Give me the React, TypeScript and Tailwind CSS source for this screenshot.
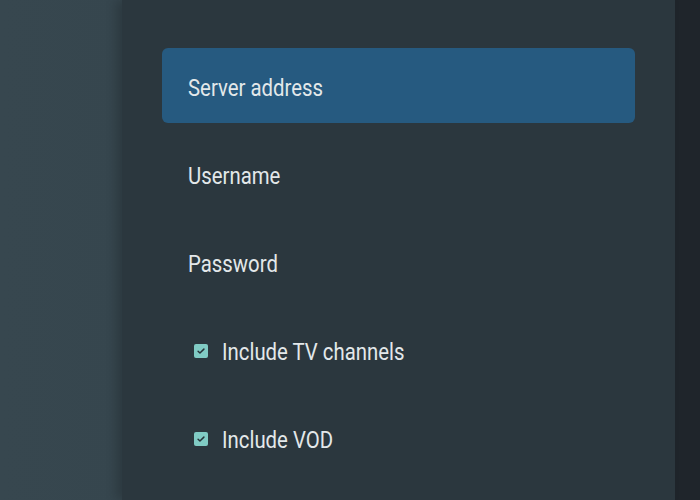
import React from 'react';

const items = [
    { label: 'Server address', active: true },
    { label: 'Username' },
    { label: 'Password' },
    { label: 'Include TV channels', checkbox: true },
    { label: 'Include VOD', checkbox: true },
];

const CheckBox = () => (
    <span className="mr-[14px] mt-[3px] flex h-[14px] w-[14px] shrink-0 items-center justify-center rounded-[2px] bg-[#80cbc4]">
        <svg width="10" height="10" viewBox="0 0 24 24" fill="none" stroke="#263238" strokeWidth="3.5" strokeLinecap="round" strokeLinejoin="round">
            <path d="M5 12.5l4.5 4.5L19 7.5" />
        </svg>
    </span>
);

export default function App() {
    return (
        <div className="flex h-[500px] w-[700px] overflow-hidden bg-[#37474f] font-['Roboto',sans-serif]">
            <div className="w-[122px] shrink-0 bg-gradient-to-r from-[#37474f] to-[#36464e]" />
            <div className="relative w-[553px] shrink-0 bg-[#2b373e] shadow-[-6px_0_10px_rgba(0,0,0,0.18)]">
                <div className="flex flex-col gap-[13px] pl-[40px] pr-[40px] pt-[48px]">
                    {items.map((item) => (
                        <div
                            key={item.label}
                            className={`flex h-[75px] items-center rounded-[6px] text-[23px] text-[#e3e8ea] ${
                                item.active ? 'bg-[#265a80]' : ''
                            } ${item.checkbox ? 'pl-[32px]' : 'pl-[26px]'}`}
                        >
                            {item.checkbox && <CheckBox />}
                            <span className="inline-block origin-left translate-y-[3px] scale-x-[0.885] whitespace-nowrap leading-none">{item.label}</span>
                        </div>
                    ))}
                </div>
            </div>
            <div className="flex-1 bg-[#1f252b]" />
        </div>
    );
}
